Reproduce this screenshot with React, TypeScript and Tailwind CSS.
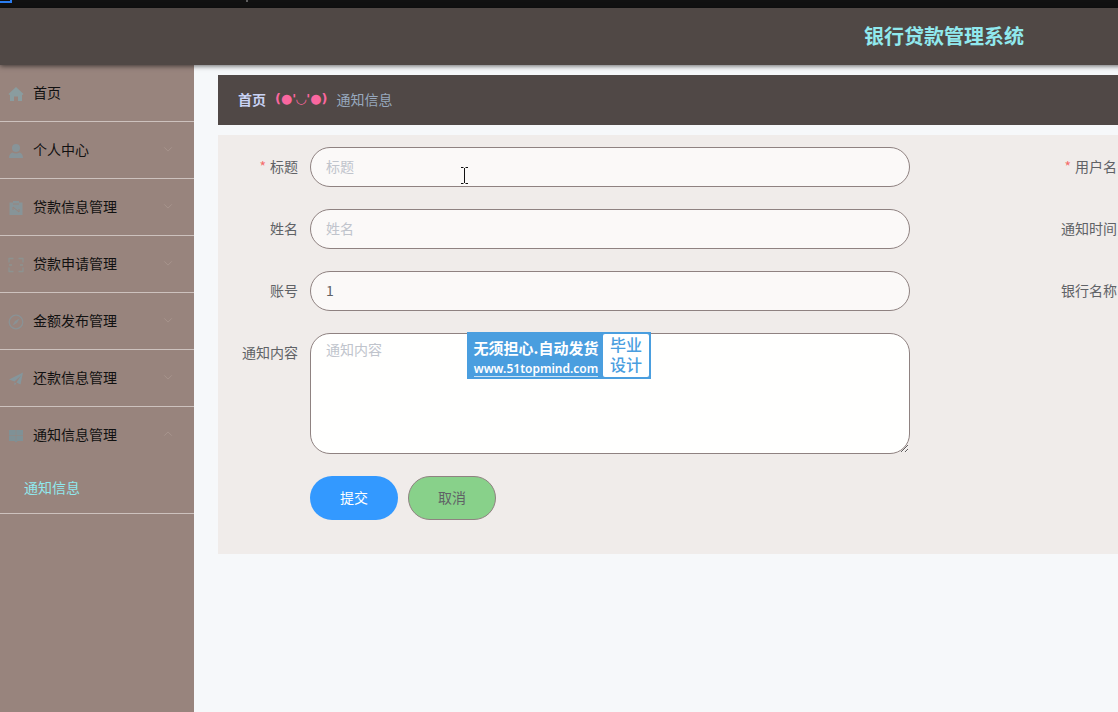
import React from 'react';

interface MenuItem {
  label: string;
  icon: React.ReactNode;
  tone: string;
  children?: string[];
}

const menu: MenuItem[] = [
  {
    label: '首页',
    tone: 'text-[#8a9c9f]',
    icon: <path fill="currentColor" d="M8 1 15.5 8 14.500 9 14 8.500V15h-4v-4.500H6V15H2V8.500L1.500 9 .5 8z" />,
  },
  {
    label: '个人中心',
    tone: 'text-[#879499]',
    icon: (
      <>
        <circle cx="8" cy="5" r="4" fill="currentColor" />
        <path fill="currentColor" d="M4.500 9.500c2 1.300 5 1.300 7 0 2.300.8 3.500 2.500 3.500 5.500H1c0-3 1.200-4.700 3.500-5.500z" />
      </>
    ),
    children: [],
  },
  {
    label: '贷款信息管理',
    tone: 'text-[#879498]',
    icon: (
      <>
        <path fill="currentColor" d="M1.500 2.500H5V1h6v1.500h3.500V15h-13z" />
        <path stroke="#98847d" fill="none" d="M5 4h6M5 7l6 5M5 7v3M11 9v3" />
      </>
    ),
    children: [],
  },
  {
    label: '贷款申请管理',
    tone: 'text-[#8d9290]',
    icon: (
      <path
        stroke="currentColor"
        strokeWidth="1.300"
        fill="none"
        d="M1 5.500V1.500h4.500M10.500 1.500H15v4M15 10.500v4h-4.500M5.500 14.500H1v-4M1 8h3M12 8h3"
      />
    ),
    children: [],
  },
  {
    label: '金额发布管理',
    tone: 'text-[#8a9295]',
    icon: (
      <>
        <circle cx="8" cy="8" r="6.800" stroke="currentColor" strokeWidth="1.300" fill="none" />
        <path fill="currentColor" d="M11.500 4.500 9 9l-4.500 2.500L7 7z" />
      </>
    ),
    children: [],
  },
  {
    label: '还款信息管理',
    tone: 'text-[#85969c]',
    icon: <path fill="currentColor" d="M15 1.500 12.500 13.500 8.500 11.500 13 4.500 6.500 10.500 1 8.500zM6.500 11.500l1.700.9L6.500 14.500z" />,
    children: [],
  },
  {
    label: '通知信息管理',
    tone: 'text-[#7f9196]',
    icon: (
      <>
        <path fill="currentColor" d="M1 2h14v11H9.500L8 14.500 6.500 13H1z" />
        <path stroke="#98847d" strokeWidth="0.500" d="M8 2v11M1 7.500h14" />
      </>
    ),
    children: ['通知信息'],
  },
];

function Chevron({ up = false }: { up?: boolean }) {
  return (
    <svg className="mr-px mb-1 ml-auto size-2.5 text-[#a9968f]" viewBox="0 0 12 12" fill="none" stroke="currentColor">
      <path d={up ? 'M1.500 8 6 3.500 10.500 8' : 'M1.500 4 6 8.500 10.500 4'} />
    </svg>
  );
}

function Sidebar() {
  return (
    <nav className="w-[194px] shrink-0 bg-[#98847d]">
      <ul>
        {menu.map((item) => {
          const open = !!item.children?.length;
          return (
            <li key={item.label} className="border-b border-[#cdc2be]">
              <a href="#" className="flex h-14 items-center pt-0.5 pr-5 pl-2 text-sm text-[#111]">
                <svg className={`mr-2 size-4 ${item.tone}`} viewBox="0 0 16 16">
                  {item.icon}
                </svg>
                <span className="ml-px pb-1">{item.label}</span>
                {item.children && <Chevron up={open} />}
              </a>
              {item.children?.map((child) => (
                <a key={child} href="#" className="flex h-[50px] items-center pb-0.5 pl-6 text-sm text-[#90e9ee]">
                  {child}
                </a>
              ))}
            </li>
          );
        })}
      </ul>
    </nav>
  );
}

interface FieldProps {
  id: string;
  label: string;
  required?: boolean;
  value?: string;
  multiline?: boolean;
}

function Field({ id, label, required, value, multiline }: FieldProps) {
  const box =
    'w-[600px] rounded-[20px] border border-[#8f8281] px-[15px] text-sm text-[#606266] placeholder:text-[#c0c4cc] focus:outline-none';

  return (
    <div className="flex items-start">
      <label htmlFor={id} className="mr-3 w-[76px] shrink-0 text-right text-sm leading-[38px] text-[#606266]">
        {required && <span className="mr-1 text-[#f56c6c]">*</span>}
        {label}
      </label>
      {multiline ? (
        <textarea id={id} placeholder={label} className={`${box} block h-[121px] resize bg-[#fffffe] py-[5px] leading-5`} />
      ) : (
        <input id={id} type="text" placeholder={label} defaultValue={value} className={`${box} h-10 bg-[#fbf9f8] pb-0.5`} />
      )}
    </div>
  );
}

function Watermark() {
  return (
    <div className="absolute top-[332px] left-[467px] flex h-[47px] w-[184px] bg-[#4a9edf] p-0.5">
      <div className="flex w-[134px] flex-col items-center text-white">
        <span className="text-[15px] leading-7 font-bold whitespace-nowrap">无须担心.自动发货</span>
        <a href="#" className="border-b border-white/70 font-['Noto_Sans'] text-xs leading-[14px] font-semibold">
          www.51topmind.com
        </a>
      </div>
      <div className="flex flex-1 items-start justify-center rounded-xs bg-white text-center text-base leading-5 font-medium text-[#4a9edf]">
        毕业
        <br />
        设计
      </div>
    </div>
  );
}

export default function App() {
  return (
    <div className="relative h-screen overflow-hidden bg-[#f6f8fa] font-['Noto_Sans_CJK_SC',sans-serif]">
      <div className="flex min-h-full w-full min-w-[1888px] flex-col">
        {/* Window edge */}
        <div className="h-2 bg-[#111]">
          <svg className="h-2 w-64" viewBox="0 0 256 8" fill="none">
            <path d="M0 2h11V0" stroke="#2b7df0" strokeWidth="2" />
            <path d="M247 0v2" stroke="#aaa" />
          </svg>
        </div>

        <header className="relative z-10 flex h-[57px] items-center justify-center bg-[#504845] pb-0.5 shadow-[0_1px_5px_rgba(0,0,0,0.6)]">
          <h1 className="text-xl font-bold text-[#90e9ee]">银行贷款管理系统</h1>
        </header>

        <div className="flex flex-1">
          <Sidebar />

          <main className="flex-1 px-6 pt-2.5">
            {/* Breadcrumb */}
            <div className="mb-2.5 flex h-[50px] items-center bg-[#504846] px-5 pb-0.5 text-sm">
              <a href="#" className="font-bold text-[#c9d3f5]">首页</a>
              <span className="mx-[9px] font-['DejaVu_Sans'] text-[13px] font-bold text-[#f9679f]">(●'◡'●)</span>
              <span className="text-[#97a8be]">通知信息</span>
            </div>

            <form className="bg-[#f0ecea] px-1 pt-3 pb-[34px]">
              <div className="grid grid-cols-2 gap-y-[22px]">
                <Field id="title" label="标题" required />
                <Field id="username" label="用户名" required />
                <Field id="name" label="姓名" />
                <Field id="time" label="通知时间" />
                <Field id="account" label="账号" value="1" />
                <Field id="bank" label="银行名称" />
                <Field id="content" label="通知内容" multiline />
              </div>
              <div className="mt-[22px] ml-[88px] flex gap-2.5 text-sm">
                <button type="submit" className="h-11 w-[88px] rounded-[22px] bg-[#3399ff] pb-0.5 text-white">提交</button>
                <button
                  type="button"
                  className="h-11 w-[88px] rounded-[22px] border border-[#8f8281] bg-[#88d18a] pb-0.5 text-[#606266]"
                >
                  取消
                </button>
              </div>
            </form>
          </main>
        </div>
      </div>

      <Watermark />

      {/* Text cursor */}
      <svg className="absolute top-[167px] left-[460px] h-[17px] w-[9px]" viewBox="0 0 9 17" stroke="#111" fill="none">
        <path d="M1 .5h2.500M5.500 .5H8M4.500 1v15M1 16.500h2.500M5.500 16.500H8" />
      </svg>
    </div>
  );
}
